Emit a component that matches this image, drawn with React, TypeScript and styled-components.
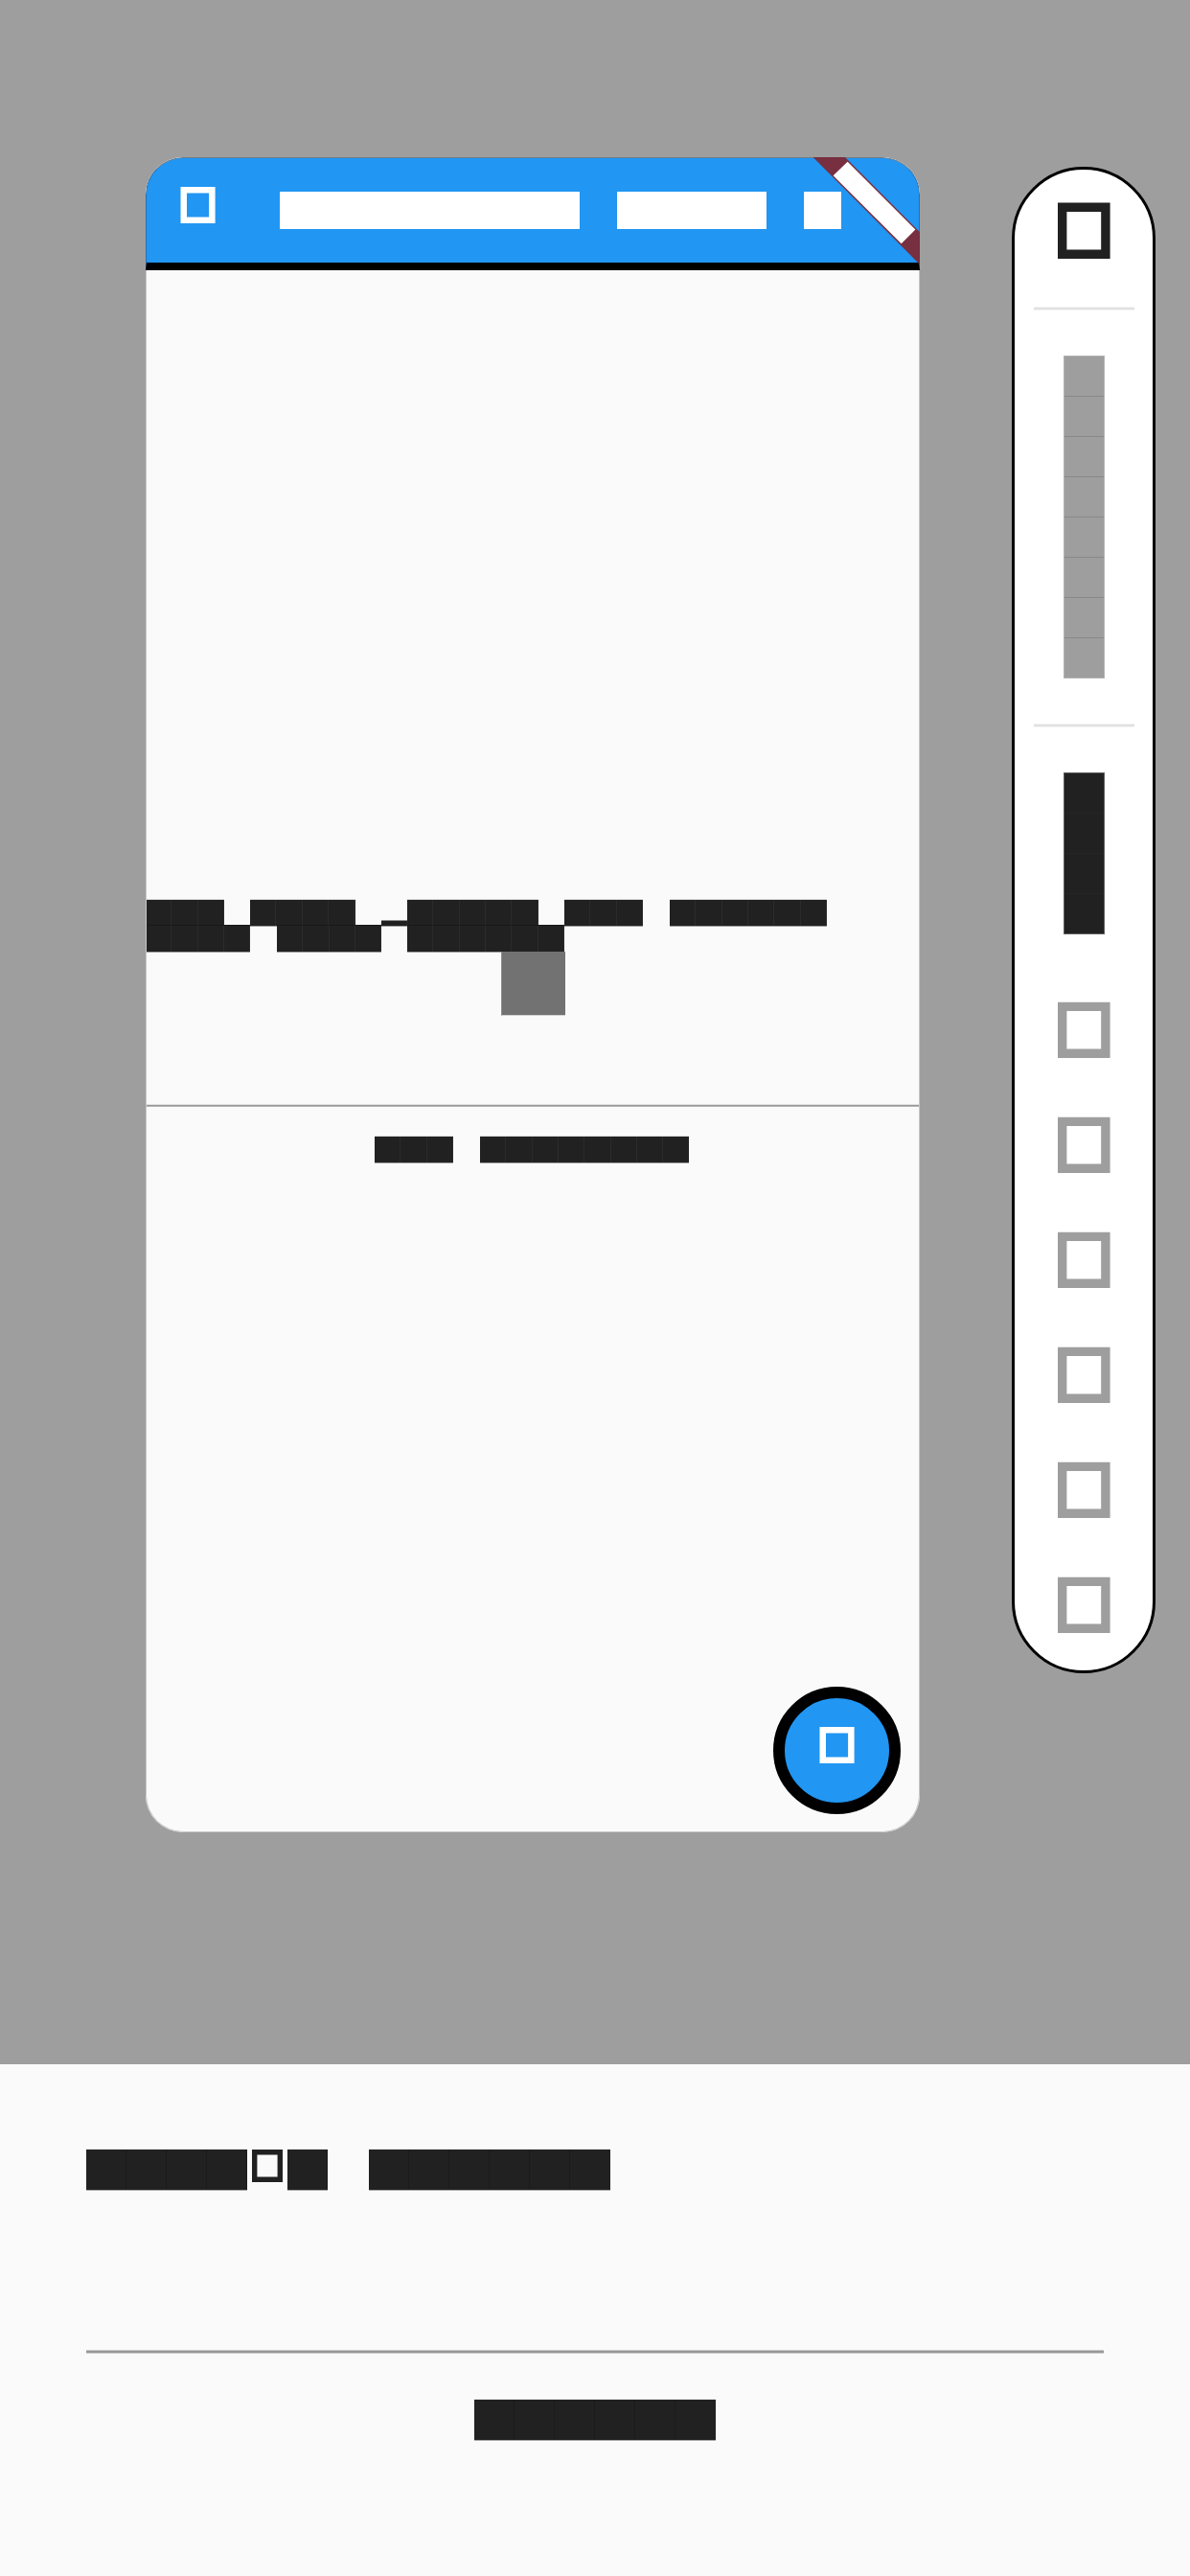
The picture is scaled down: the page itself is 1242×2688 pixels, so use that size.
import React from "react";
import styled, { createGlobalStyle } from "styled-components";

const ink = "#212121";
const muted = "#9e9e9e";
const paper = "#fafafa";
const blue = "#2196f3";

const GlobalStyle = createGlobalStyle`
  *, *::before, *::after { box-sizing: border-box; }
  body { margin: 0; background: ${muted}; font-family: Roboto, sans-serif; }
`;

const Screen = styled.div`
  width: 1242px;
  height: 2688px;
  display: flex;
  flex-direction: column;
  overflow: hidden;
  background: ${muted};
`;

const Stage = styled.main`
  height: 2154px;
  flex: none;
  display: flex;
  align-items: flex-start;
  padding: 164px 36px 0 152px;
  justify-content: space-between;
`;

const Phone = styled.section`
  position: relative;
  width: 808px;
  height: 1748px;
  display: flex;
  flex-direction: column;
  overflow: hidden;
  border-radius: 39px;
  background: ${paper};
  &::after {
    content: "";
    position: absolute;
    inset: 118px 0 0 0;
    border: 1px solid #c8c8c8;
    border-top: 0;
    border-radius: 0 0 39px 39px;
    pointer-events: none;
  }
`;

const AppBar = styled.header`
  height: 118px;
  flex: none;
  display: flex;
  align-items: flex-start;
  padding: 30px 0 0 35px;
  background: ${blue};
  border: 1px solid #2b6fa8;
  border-top-color: #6f7d89;
  border-bottom: 8px solid #000;
  border-radius: 39px 39px 0 0;
`;

const BarTitle = styled.div`
  padding: 5px 0 0 67.4px;
`;

const Ribbon = styled.svg`
  position: absolute;
  z-index: 1;
  top: 0;
  right: 0;
`;

const Body = styled.div`
  flex: 1;
  display: flex;
  flex-direction: column;
  padding-top: 656px;
`;

const Avatar = styled.div`
  width: 67px;
  height: 67px;
  margin: -1px auto 0;
  background: #727272;
  border-left: 1px solid #8c8c8c;
  border-bottom: 1px solid #d0d0d0;
`;

const Rule = styled.hr<{ $edge: string; $core: string; $end?: string; $thickness?: number }>`
  flex: none;
  width: 100%;
  margin: 0;
  height: ${(p) => (p.$thickness ?? 2) + 2}px;
  border: 0;
  border-top: 1px solid ${(p) => p.$edge};
  border-bottom: 1px solid ${(p) => p.$end ?? p.$edge};
  background: ${(p) => p.$core};
`;

const PhoneRule = styled.div`
  margin-top: 92px;
`;

const Caption = styled.div`
  display: flex;
  padding: 30px 0 0 239.4px;
`;

const Fab = styled.button`
  position: absolute;
  right: 20px;
  bottom: 19px;
  width: 133px;
  height: 133px;
  display: flex;
  justify-content: center;
  padding: 30px 0 0;
  border: 12px solid #000;
  border-radius: 50%;
  background: ${blue};
`;

const Rail = styled.aside`
  width: 150px;
  height: 1572px;
  margin-top: 10px;
  display: flex;
  flex-direction: column;
  align-items: center;
  padding: 34px 19px 0 20px;
  border: 3px solid #000;
  border-radius: 75px;
  background: #fff;
`;

const RailRule = styled.div<{ $before: number; $after: number }>`
  width: 105px;
  margin: ${(p) => p.$before}px 0 ${(p) => p.$after}px;
`;

const RailTools = styled.nav`
  display: flex;
  flex-direction: column;
  gap: 61px;
  margin-top: 70px;
`;

const Column = styled.div<{ $count: number; $color: string; $seam: string; $edge: string }>`
  width: 43px;
  height: ${(p) => p.$count * 42 + 1}px;
  border: 1px solid ${(p) => p.$edge};
  background: repeating-linear-gradient(
    ${(p) => p.$color} 0 41px,
    ${(p) => p.$seam} 41px 42px
  );
`;

const Sheet = styled.footer`
  flex: 1;
  display: flex;
  flex-direction: column;
  padding: 88px 90px 0;
  background: ${paper};
`;

const SheetTitle = styled.div`
  height: 210px;
  display: flex;
  align-items: flex-start;
`;

const TitleIcon = styled.div`
  width: 42px;
  padding: 1px 0 0 5px;
`;

const SheetAction = styled.div`
  display: flex;
  justify-content: center;
  padding-top: 47px;
`;

const LineRow = styled.div<{ $pull?: number }>`
  display: flex;
  align-items: flex-end;
  margin-top: ${(p) => -(p.$pull ?? 0)}px;
`;

const Run = styled.div<{ $w: number; $h: number; $color: string; $seam: string; $cell: number; $top: string; $bottom: string }>`
  flex: none;
  width: ${(p) => p.$w}px;
  height: ${(p) => p.$h}px;
  border-top: 1px solid ${(p) => p.$top};
  border-bottom: 1px solid ${(p) => p.$bottom};
  background: repeating-linear-gradient(
    90deg,
    ${(p) => p.$color} 0 ${(p) => p.$cell - 1}px,
    ${(p) => p.$seam} ${(p) => p.$cell - 1}px ${(p) => p.$cell}px
  );
`;

const Space = styled.div<{ $w: number }>`
  flex: none;
  width: ${(p) => p.$w}px;
`;

type LineProps = {
  pattern: string;
  cell: number;
  height: number;
  color?: string;
  seam?: string;
  top?: string;
  bottom?: string;
  pull?: number;
};

/* Pattern: "x" is a solid cell, "_" a low bar, a blank is an empty cell. */
function Line({ pattern, cell, height, color = ink, seam = "#2b2b2b", top = "#d9d9d9", bottom = "#9c9c9c", pull }: LineProps) {
  const runs = pattern.match(/x+|_+| +/g) ?? [];
  return (
    <LineRow $pull={pull}>
      {runs.map((run, i) =>
        run[0] === " " ? (
          <Space key={i} $w={run.length * cell} />
        ) : (
          <Run
            key={i}
            $w={run.length * cell}
            $h={run[0] === "_" ? 7 : height}
            $color={color}
            $seam={seam}
            $cell={cell}
            $top={run[0] === "_" ? "#8c8c8c" : top}
            $bottom={bottom}
          />
        )
      )}
    </LineRow>
  );
}

const SheetLine = ({ pattern }: { pattern: string }) => (
  <Line pattern={pattern} cell={42.1} height={44} seam="#1b1b1b" top="#e6e6e6" bottom="#a6a6a6" />
);

const IconSvg = styled.svg`
  display: block;
  flex: none;
`;

type BoxIconProps = { width: number; height: number; x: number; y: number; w: number; h: number; t: number; color: string };

function BoxIcon({ width, height, x, y, w, h, t, color }: BoxIconProps) {
  return (
    <IconSvg width={width} height={height} viewBox={`0 0 ${width} ${height}`}>
      <path
        fill={color}
        fillRule="evenodd"
        d={`M${x} ${y}h${w}v${h}h${-w}zM${x + t} ${y + t}v${h - 2 * t}h${w - 2 * t}v${-(h - 2 * t)}z`}
      />
    </IconSvg>
  );
}

const RailIcon = ({ color, y }: { color: string; y: number }) => (
  <BoxIcon width={55} height={59} x={0} y={y} w={54.6} h={59 - y} t={9.4} color={color} />
);

const BarIcon = () => <BoxIcon width={37} height={38} x={0.5} y={0} w={36.1} h={38} t={6.5} color="#fff" />;

export default function App() {
  return (
    <>
      <GlobalStyle />
      <Screen>
        <Stage>
          <Phone>
            <AppBar>
              <BarIcon />
              <BarTitle>
                <Line pattern="xxxxxxxx xxxx x" cell={39.06} height={39} color="#fff" seam="#fff" top="#fff" bottom="#fff" />
              </BarTitle>
            </AppBar>
            <Ribbon width="112" height="112" viewBox="848 164 112 112">
              <path d="M848.5 164L882 164L960 242.2V276z" fill="#782f3f" />
              <path d="M869.6 183.3L884.6 168.8L955.4 239.4L940.7 254.3z" fill="#fff" />
              <path d="M884.7 197.7L899 183.3" stroke="#eee" strokeWidth="0.6" />
            </Ribbon>
            <Body>
              <Line pattern="xxx xxxx _xxxxx xxx xxxxxx" cell={27.34} height={29} />
              <Line pattern="xxxx xxxx xxxxxx" cell={27.34} height={29} top="#191919" pull={2} />
              <Avatar />
              <PhoneRule>
                <Rule $edge="#e2e2e2" $core="#999" $end="#b2b2b2" $thickness={1} />
              </PhoneRule>
              <Caption>
                <Line pattern="xxx xxxxxxxx" cell={27.34} height={29} />
              </Caption>
            </Body>
            <Fab>
              <BarIcon />
            </Fab>
          </Phone>
          <Rail>
            <RailIcon color={ink} y={0.5} />
            <RailRule $before={50} $after={47}>
              <Rule $edge="#f3f3f3" $core="#e0e0e0" />
            </RailRule>
            <Column $count={8} $color={muted} $seam="#888" $edge="#b4b4b4" />
            <RailRule $before={47} $after={47}>
              <Rule $edge="#f3f3f3" $core="#e0e0e0" />
            </RailRule>
            <Column $count={4} $color={ink} $seam="#252525" $edge="#5f5f5f" />
            <RailTools>
              {[0, 1, 2, 3, 4, 5].map((i) => (
                <RailIcon key={i} color={muted} y={0.7} />
              ))}
            </RailTools>
          </Rail>
        </Stage>
        <Sheet>
          <SheetTitle>
            <SheetLine pattern="xxxx" />
            <TitleIcon>
              <BoxIcon width={33} height={34} x={0} y={0} w={32} h={34} t={5.4} color={ink} />
            </TitleIcon>
            <SheetLine pattern="x xxxxxx" />
          </SheetTitle>
          <Rule $edge="#c8c8c8" $core="#999" />
          <SheetAction>
            <SheetLine pattern="xxxxxx" />
          </SheetAction>
        </Sheet>
      </Screen>
    </>
  );
}
